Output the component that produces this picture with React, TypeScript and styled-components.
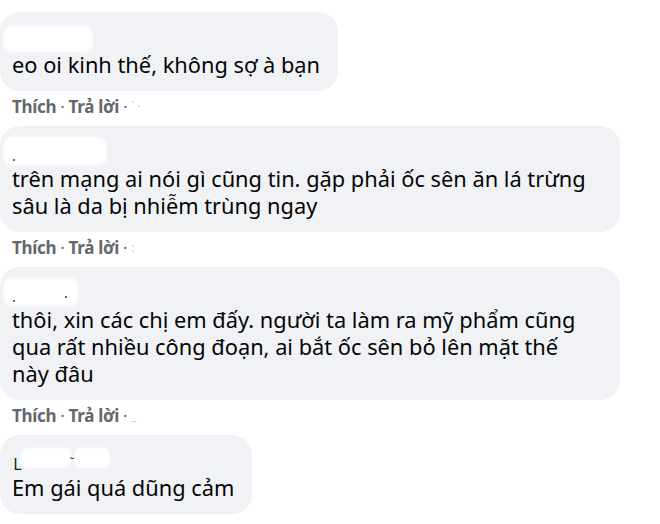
import React from "react";
import styled, { createGlobalStyle } from "styled-components";

const Global = createGlobalStyle`
  html, body { margin: 0; padding: 0; background: #ffffff; }
  body { font-family: "Noto Sans", "Open Sans", Arial, sans-serif; }
`;

const Thread = styled.div`
  display: flex;
  flex-direction: column;
  align-items: flex-start;
  padding-top: 12px;
  width: 660px;
  height: 524px;
  box-sizing: border-box;
  overflow: hidden;
`;

const Comment = styled.div`
  display: flex;
  flex-direction: column;
  align-items: flex-start;
`;

const Bubble = styled.div<{ $full?: boolean }>`
  box-sizing: border-box;
  width: ${(p) => (p.$full ? "620px" : "fit-content")};
  background: #f0f2f5;
  border-radius: 20px;
  padding: 10px 18px 13px 12px;
`;

const NameLine = styled.div`
  height: 29px;
  display: flex;
  align-items: flex-start;
  margin-left: -7px;
`;

const Patch = styled.span<{ $w: number; $h: number; $top?: number }>`
  display: flex;
  align-items: flex-end;
  justify-content: space-between;
  box-sizing: border-box;
  width: ${(p) => p.$w}px;
  height: ${(p) => p.$h}px;
  margin-top: ${(p) => p.$top ?? 4}px;
  padding: 0 10px 3px 8px;
  background: #ffffff;
  border-radius: 6px;
  box-shadow: 0 0 3px 1px #ffffff;
`;

const Speck = styled.i<{ $lift?: number }>`
  display: block;
  width: 2px;
  height: 2px;
  margin-bottom: ${(p) => p.$lift ?? 0}px;
  border-radius: 1px;
  background: #3a3b3c;
`;

const Letter = styled.span<{ $top: number; $size: number }>`
  margin-top: ${(p) => p.$top}px;
  font-size: ${(p) => p.$size}px;
  line-height: ${(p) => p.$size}px;
  height: ${(p) => p.$size}px;
  color: #1c1e21;
`;

const Body = styled.div`
  font-size: 21.8px;
  line-height: 27px;
  color: #050505;
  white-space: nowrap;
`;

const Actions = styled.div`
  display: flex;
  align-items: center;
  padding: 4px 0 9px 12px;
  height: 22px;
  font-size: 17px;
  font-weight: 700;
  color: #65676b;
  letter-spacing: -0.3px;
`;

const Dot = styled.span`
  margin: 0 4px;
  font-weight: 400;
`;

const Faint = styled.span`
  display: inline-block;
  width: 50px;
  color: #c8cacf;
  font-size: 12px;
  font-weight: 400;
  filter: blur(0.6px);
`;

type Item = {
  lines: string[];
  name: React.ReactNode;
  stamp: string;
  actions?: boolean;
};

const items: Item[] = [
  {
    lines: ["eo oi kinh thế, không sợ à bạn"],
    name: <Patch $w={86} $h={24} $top={5} />,
    stamp: "´       ·",
  },
  {
    lines: [
      "trên mạng ai nói gì cũng tin. gặp phải ốc sên ăn lá trừng",
      "sâu là da bị nhiễm trùng ngay",
    ],
    name: (
      <Patch $w={100} $h={26} $top={2}>
        <Speck />
      </Patch>
    ),
    stamp: ":",
  },
  {
    lines: [
      "thôi, xin các chị em đấy. người ta làm ra mỹ phẩm cũng",
      "qua rất nhiều công đoạn, ai bắt ốc sên bỏ lên mặt thế",
      "này đâu",
    ],
    name: (
      <Patch $w={72} $h={26} $top={2}>
        <Speck />
        <Speck $lift={4} />
      </Patch>
    ),
    stamp: "_",
  },
  {
    lines: ["Em gái quá dũng cảm"],
    name: (
      <>
        <Letter $top={11} $size={16}>&nbsp;&nbsp;L</Letter>
        <Patch $w={48} $h={18} $top={4} />
        <Letter $top={11} $size={14}>˘</Letter>
        <Patch $w={34} $h={18} $top={4} />
      </>
    ),
    stamp: "",
    actions: false,
  },
];

export default function App() {
  return (
    <>
      <Global />
      <Thread>
        {items.map((it, i) => (
          <Comment key={i}>
            <Bubble $full={it.lines.length > 1}>
              <NameLine>{it.name}</NameLine>
              <Body>
                {it.lines.map((l, j) => (
                  <div key={j}>{l}</div>
                ))}
              </Body>
            </Bubble>
            {it.actions !== false && (
              <Actions>
                Thích<Dot>·</Dot>Trả lời<Dot>·</Dot>
                <Faint>{it.stamp}</Faint>
              </Actions>
            )}
          </Comment>
        ))}
      </Thread>
    </>
  );
}
